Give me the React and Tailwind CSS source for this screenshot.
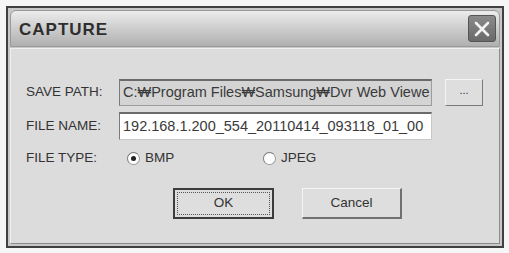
import React from 'react';

function Radio({ checked }) {
  return (
    <span className="relative inline-block w-[13px] h-[13px] rounded-full bg-white border border-[#9a9a9a] border-t-[#777] border-l-[#777]">
      {checked && <span className="absolute left-[3px] top-[3px] w-[5px] h-[5px] rounded-full bg-[#222]" />}
    </span>
  );
}

export default function App() {
  return (
    <div className="w-[509px] h-[253px] bg-[#f6f6f6] pt-[6px] pl-[6px] font-['Liberation_Sans',sans-serif] text-[#333]">
      <div className="w-[498px] h-[242px] border-2 border-[#404040] bg-[#c8c8c8] p-[2px] flex flex-col">
        <div className="h-[37px] shrink-0 rounded-t-[6px] border border-[#9a9a9a] bg-gradient-to-b from-[#ececec] via-[#cdcdcd] to-[#b0b0b0] flex items-center justify-between pl-[8px] pr-[3px]">
          <span className="text-[17px] font-bold tracking-[1px] text-[#2e2e2e] mt-[2px]">CAPTURE</span>
          <div className="w-[28px] h-[27px] rounded-[3px] bg-gradient-to-b from-[#8a8a8a] to-[#6a6a6a] border border-[#555] flex items-center justify-center">
            <svg width="18" height="18" viewBox="0 0 18 18">
              <path d="M3 3 L15 15 M15 3 L3 15" stroke="#f2f2f2" strokeWidth="2.6" strokeLinecap="round" />
            </svg>
          </div>
        </div>
        <div className="flex-1 mt-[1px] bg-[#dcdcdc] border border-[#f0f0f0] border-r-[#8c8c8c] border-b-[#8c8c8c] flex flex-col pl-[15px] pt-[29px] text-[13.5px]">
          <div className="flex items-center h-[28px]">
            <span className="w-[93px]">SAVE PATH:</span>
            <div className="w-[313px] h-[27px] bg-[#d4d4d4] border border-[#9c9c9c] border-t-2 border-t-[#6a6a6a] border-l-[#7a7a7a] flex items-center pl-[3px] overflow-hidden whitespace-nowrap text-[14.5px] text-[#3a3a3a]">
              C:₩Program Files₩Samsung₩Dvr Web Viewe
            </div>
            <div className="ml-[13px] w-[38px] h-[27px] bg-[#dedede] border border-[#f4f4f4] border-r-[#7a7a7a] border-b-[#7a7a7a] flex items-center justify-center text-[11px] pb-[3px]">
              ...
            </div>
          </div>
          <div className="flex items-center h-[28px] mt-[6px]">
            <span className="w-[93px]">FILE NAME:</span>
            <div className="w-[313px] h-[28px] bg-white border border-[#c8c8c8] border-t-2 border-t-[#6a6a6a] border-l-[#7a7a7a] flex items-center pl-[3px] overflow-hidden whitespace-nowrap text-[14.5px] text-[#3a3a3a]">
              192.168.1.200_554_20110414_093118_01_00
            </div>
          </div>
          <div className="flex items-center h-[20px] mt-[8px]">
            <span className="w-[101px]">FILE TYPE:</span>
            <Radio checked />
            <span className="ml-[5px] w-[118px]">BMP</span>
            <Radio />
            <span className="ml-[5px]">JPEG</span>
          </div>
          <div className="flex mt-[20px] pl-[147px] gap-[28px]">
            <div className="w-[101px] h-[31px] bg-[#dedede] border-2 border-[#3c3c3c] p-[2px]">
              <div className="w-full h-full border border-dotted border-[#555] flex items-center justify-center text-[13.5px]">OK</div>
            </div>
            <div className="w-[100px] h-[31px] bg-[#dedede] border border-[#f4f4f4] border-r-2 border-b-2 border-r-[#707070] border-b-[#707070] flex items-center justify-center text-[13.5px]">
              Cancel
            </div>
          </div>
        </div>
      </div>
    </div>
  );
}
